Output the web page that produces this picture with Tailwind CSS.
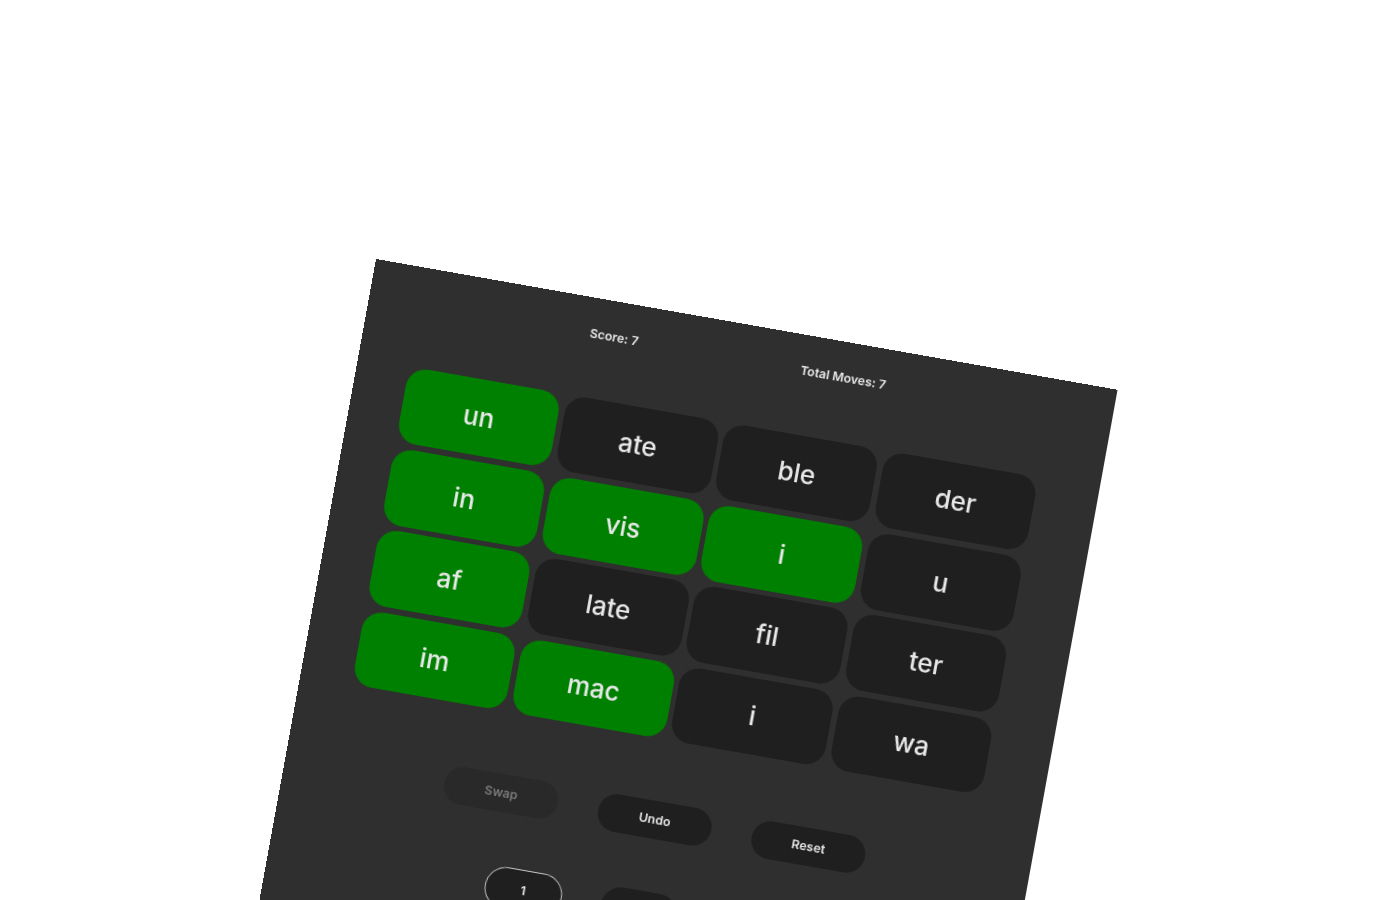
<!DOCTYPE html>
<html lang="en">
<head>
  <meta charset="UTF-8" />
  <title>Word Tiles</title>
  <script src="https://cdn.jsdelivr.net/npm/@tailwindcss/browser@4"></script>
</head>
<body class="bg-white h-screen overflow-hidden font-['Inter',sans-serif] text-[#e8e8e8]">
  <div class="pt-[259px] pl-[376px]">
    <!-- whole game panel is tilted 10deg -->
    <div class="w-[753px] h-[760px] bg-[#2f2f2f] origin-top-left rotate-[10deg] skew-x-[-0.3deg] will-change-transform pt-[28px]">
      <div class="flex justify-around w-[465px] ml-[141.5px] text-[12.4px] leading-4 font-semibold">
        <span>Score: 7</span>
        <span>Total Moves: 7</span>
      </div>

      <div class="grid grid-cols-4 gap-x-[5.83px] gap-y-[5.7px] w-[639.5px] ml-[51.7px] mt-[55.7px] text-[26px] font-medium">
        <div class="h-[76.6px] rounded-[20px] bg-[#008000] flex items-center justify-center">un</div>
        <div class="h-[76.6px] rounded-[20px] bg-[#1f1f1f] flex items-center justify-center">ate</div>
        <div class="h-[76.6px] rounded-[20px] bg-[#1f1f1f] flex items-center justify-center">ble</div>
        <div class="h-[76.6px] rounded-[20px] bg-[#1f1f1f] flex items-center justify-center">der</div>

        <div class="h-[76.6px] rounded-[20px] bg-[#008000] flex items-center justify-center">in</div>
        <div class="h-[76.6px] rounded-[20px] bg-[#008000] flex items-center justify-center">vis</div>
        <div class="h-[76.6px] rounded-[20px] bg-[#008000] flex items-center justify-center">i</div>
        <div class="h-[76.6px] rounded-[20px] bg-[#1f1f1f] flex items-center justify-center">u</div>

        <div class="h-[76.6px] rounded-[20px] bg-[#008000] flex items-center justify-center">af</div>
        <div class="h-[76.6px] rounded-[20px] bg-[#1f1f1f] flex items-center justify-center">late</div>
        <div class="h-[76.6px] rounded-[20px] bg-[#1f1f1f] flex items-center justify-center">fil</div>
        <div class="h-[76.6px] rounded-[20px] bg-[#1f1f1f] flex items-center justify-center">ter</div>

        <div class="h-[76.6px] rounded-[20px] bg-[#008000] flex items-center justify-center">im</div>
        <div class="h-[76.6px] rounded-[20px] bg-[#008000] flex items-center justify-center">mac</div>
        <div class="h-[76.6px] rounded-[20px] bg-[#1f1f1f] flex items-center justify-center">i</div>
        <div class="h-[76.6px] rounded-[20px] bg-[#1f1f1f] flex items-center justify-center">wa</div>
      </div>

      <div class="flex gap-[41px] ml-[161px] mt-[62.3px] text-[12.4px] font-semibold">
        <button class="w-[115px] h-[38px] rounded-full bg-[#292929] text-[#7a7a7a]">Swap</button>
        <button class="w-[115px] h-[38px] rounded-full bg-[#1f1f1f]">Undo</button>
        <button class="w-[115px] h-[38px] rounded-full bg-[#1f1f1f]">Reset</button>
      </div>

      <div class="flex gap-[39px] ml-[218.5px] mt-[52.5px] text-[12.4px] font-semibold">
        <button class="w-[78px] h-[42px] rounded-full bg-[#1f1f1f] border-[1.5px] border-[#c4c4c4]">1</button>
        <button class="w-[78px] h-[42px] rounded-full bg-[#1f1f1f]">2</button>
        <button class="w-[78px] h-[42px] rounded-full bg-[#1f1f1f]">3</button>
      </div>
    </div>
  </div>
</body>
</html>
